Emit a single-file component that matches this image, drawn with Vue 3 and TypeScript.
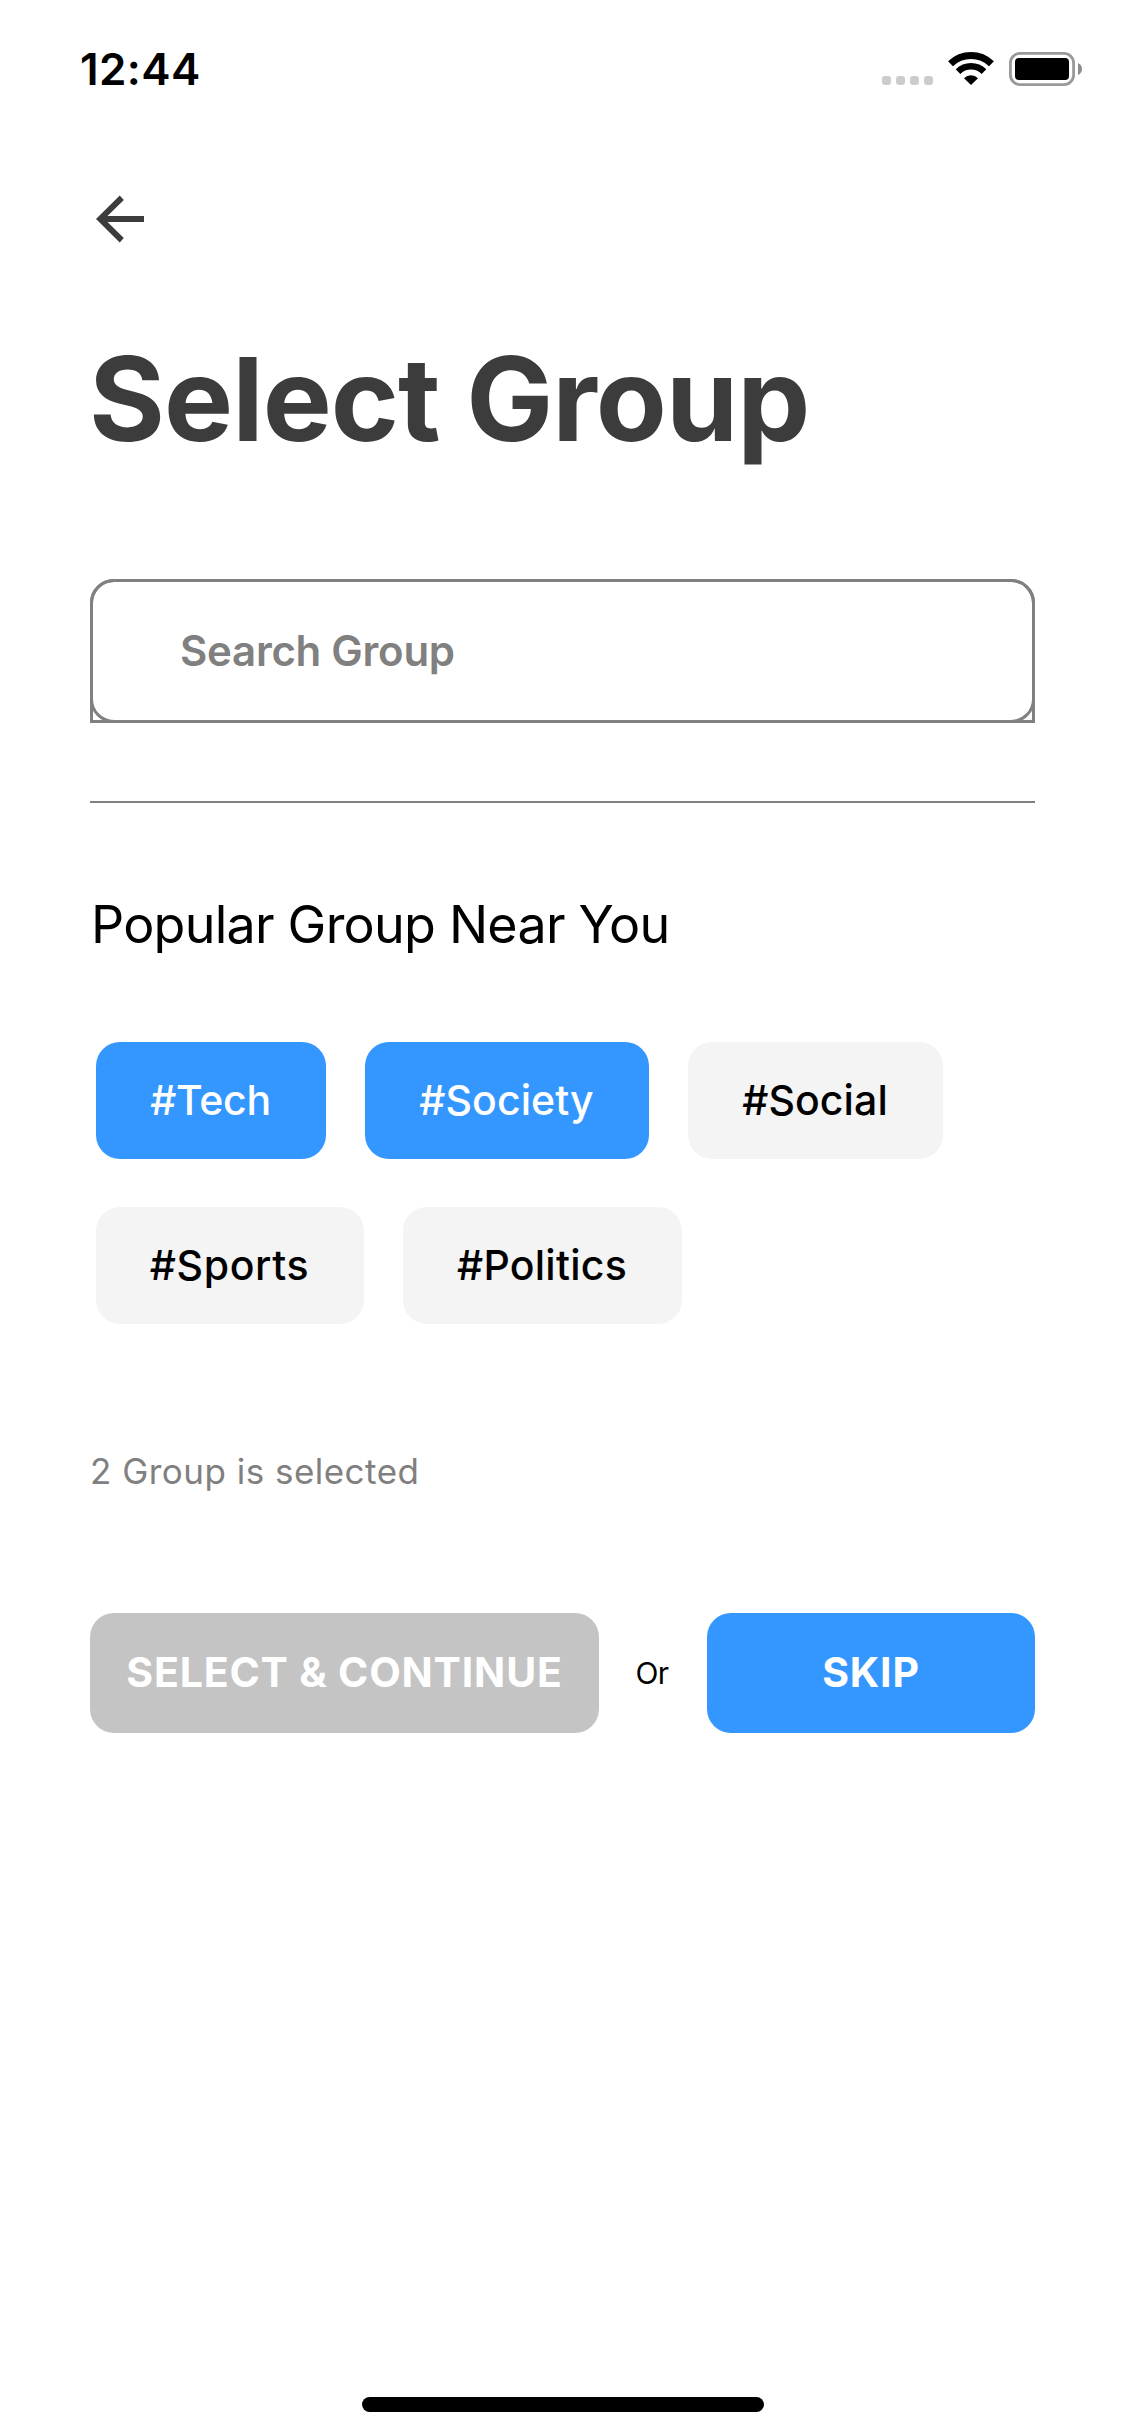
<script setup lang="ts">
import { computed, ref } from 'vue'

interface Chip {
  label: string
  width: number
  spacing: number
  selected: boolean
}

const chips = ref<Chip[]>([
  { label: '#Tech', width: 230, spacing: -0.32, selected: true },
  { label: '#Society', width: 284, spacing: 0.08, selected: true },
  { label: '#Social', width: 255, spacing: 0.08, selected: false },
  { label: '#Sports', width: 268, spacing: 0.62, selected: false },
  { label: '#Politics', width: 279, spacing: 0.26, selected: false },
])

const selectedCount = computed(() => chips.value.filter((c) => c.selected).length)
</script>

<template>
  <div class="screen">
    <header class="status">
      <span class="time">12:44</span>
      <div class="indicators">
        <div class="dots"><i v-for="n in 4" :key="n"></i></div>
        <svg class="wifi" width="48" height="36" viewBox="0 0 48 36">
          <g fill="none" stroke="#000">
            <path d="M3.51 13.78A29.5 29.5 0 0 1 44.49 13.78" stroke-width="7" />
            <path d="M11.01 21.55A18.7 18.7 0 0 1 36.99 21.55" stroke-width="6.6" />
          </g>
          <path d="M24 35L17 28.2A10 10 0 0 1 31 28.2Z" fill="#000" />
        </svg>
        <svg class="battery" width="74" height="34" viewBox="0 0 74 34">
          <rect x="1.4" y="1.4" width="63.2" height="31.2" rx="9.6" fill="none" stroke="#999" stroke-width="2.8" />
          <rect x="6" y="6" width="54" height="22" rx="4" fill="#000" />
          <path d="M69 11Q73 13 73 17T69 23Z" fill="#8c8c8c" />
        </svg>
      </div>
    </header>

    <main class="content">
      <svg class="back" width="72" height="72" viewBox="0 0 24 24">
        <path fill="#3c3c3c" d="M20 11H7.83l5.45-5.35L11.9 4.2l-7.9 7.8 7.9 7.8 1.38-1.45L7.83 13H20v-2z" />
      </svg>
      <h1>Select Group</h1>
      <div class="search"><span>Search Group</span></div>
      <div class="divider"></div>
      <h2>Popular Group Near You</h2>
      <div class="chips">
        <div
          v-for="c in chips"
          :key="c.label"
          class="chip"
          :class="{ on: c.selected }"
          :style="{ width: c.width + 'px', letterSpacing: c.spacing + 'px' }"
          @click="c.selected = !c.selected"
        >{{ c.label }}</div>
      </div>
      <p class="count">{{ selectedCount }} Group is selected</p>
      <div class="actions">
        <button class="btn continue">SELECT &amp; CONTINUE</button>
        <span class="or">Or</span>
        <button class="btn skip">SKIP</button>
      </div>
    </main>

    <footer class="home"><div class="bar"></div></footer>
  </div>
</template>

<style>
body {
  margin: 0;
  background: #fff;
}
</style>

<style scoped>
.screen {
  width: 1125px;
  height: 2436px;
  box-sizing: border-box;
  display: flex;
  flex-direction: column;
  background: #fff;
  color: #000;
  font-family: Inter, 'Liberation Sans', sans-serif;
  overflow: hidden;
}
.status {
  height: 183px;
  box-sizing: border-box;
  padding: 42px 42px 0 80px;
  display: flex;
  justify-content: space-between;
  align-items: flex-start;
}
.time {
  font-size: 44px;
  line-height: 54px;
  font-weight: 600;
  letter-spacing: 0.4px;
}
.indicators {
  display: flex;
  align-items: flex-start;
  padding-top: 8px;
}
.dots {
  display: flex;
  gap: 5px;
  margin: 26px 14px 0 0;
}
.dots i {
  width: 9px;
  height: 9px;
  border-radius: 3px;
  background: #ccc;
}
.wifi {
  display: block;
}
.battery {
  display: block;
  margin: 2px 0 0 14px;
}
.content {
  flex: 1;
  padding: 0 90px;
}
.back {
  display: block;
  margin-left: -6px;
}
h1 {
  margin: 74px 0 0 -1px;
  font-size: 116px;
  line-height: 140px;
  font-weight: 700;
  letter-spacing: -0.95px;
  color: #3c3c3c;
}
.search {
  position: relative;
  box-sizing: border-box;
  height: 144px;
  margin-top: 110px;
  padding: 0 0 1px 87px;
  display: flex;
  align-items: center;
  border: 3px solid #808080;
  border-radius: 24px 24px 0 0;
  color: #808080;
  font-size: 42px;
  font-weight: 600;
  line-height: 50px;
  letter-spacing: -0.26px;
}
.search::after {
  content: '';
  position: absolute;
  inset: -3px;
  border: 3px solid #808080;
  border-radius: 24px;
}
.divider {
  height: 2px;
  margin-top: 78px;
  background: #808080;
}
h2 {
  margin: 91px 0 0 1px;
  font-size: 52px;
  line-height: 62px;
  font-weight: 400;
  letter-spacing: -0.76px;
}
.chips {
  display: flex;
  flex-wrap: wrap;
  gap: 48px 39px;
  margin: 86px 0 0 6px;
}
.chip {
  box-sizing: border-box;
  height: 117px;
  padding-right: 1px;
  border-radius: 24px;
  background: #f4f4f4;
  font-size: 41px;
  line-height: 117px;
  font-weight: 500;
  text-align: center;
}
.chip.on {
  background: #3497ff;
  color: #fff;
}
.count {
  margin: 126px 0 0;
  font-size: 35px;
  line-height: 42px;
  letter-spacing: 0.48px;
  color: #808080;
}
.actions {
  display: flex;
  align-items: center;
  margin-top: 121px;
}
.btn {
  height: 120px;
  padding: 0 0 2px;
  border: 0;
  border-radius: 24px;
  color: #fff;
  font: 700 41px Inter, 'Liberation Sans', sans-serif;
  letter-spacing: 0.8px;
}
.continue {
  width: 509px;
  background: #c4c4c4;
}
.skip {
  width: 328px;
  background: #3497ff;
}
.or {
  width: 108px;
  box-sizing: border-box;
  padding-right: 2px;
  text-align: center;
  font-size: 30px;
  letter-spacing: -0.6px;
}
.home {
  display: flex;
  justify-content: center;
  padding-bottom: 24px;
}
.bar {
  width: 402px;
  height: 15px;
  border-radius: 8px;
  background: #000;
}
</style>
